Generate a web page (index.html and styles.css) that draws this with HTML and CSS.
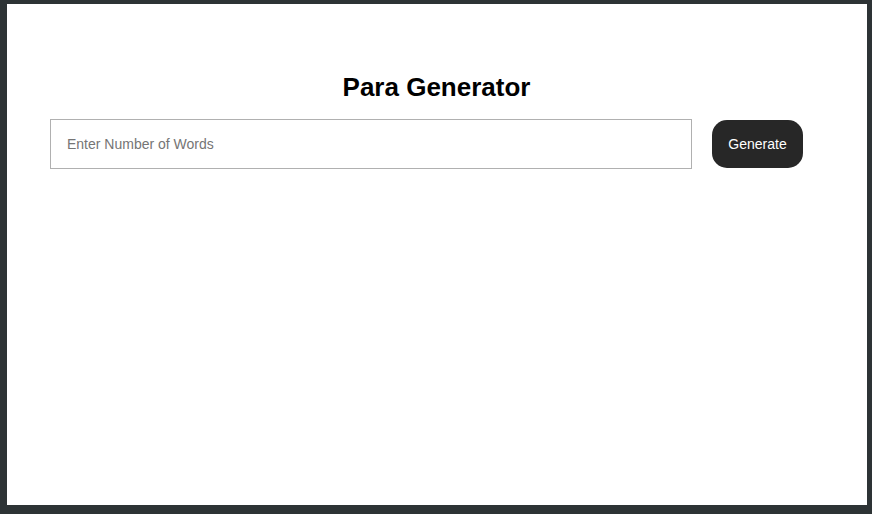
FILE: index.html
```html
<!DOCTYPE html>
<html>
<head>
<meta charset="utf-8">
<link rel="stylesheet" href="styles.css">
</head>
<body>
<main class="page">
  <h1 class="title">Para Generator</h1>
  <div class="row">
    <input class="words" type="text" placeholder="Enter Number of Words">
    <button class="btn">Generate</button>
  </div>
</main>
</body>
</html>
```
FILE: styles.css
```css
html, body { margin: 0; padding: 0; }
body {
  background: #2d3335;
  padding: 4px 5px 9px 7px;
  font-family: "Liberation Sans", Arial, sans-serif;
}
.page {
  background: #ffffff;
  height: 501px;
  box-sizing: border-box;
  padding: 68px 64px 0 43px;
}
.title {
  margin: 0 0 17px 0;
  text-align: center;
  font-size: 26px;
  line-height: 30px;
  font-weight: bold;
  color: #000;
  padding-left: 20px;
}
.row {
  display: flex;
  align-items: center;
  gap: 20px;
}
.words {
  flex: 1;
  height: 50px;
  box-sizing: border-box;
  border: 1px solid #b0b0b0;
  padding: 0 16px;
  font-family: "Liberation Sans", Arial, sans-serif;
  font-size: 14px;
  outline: none;
}
.words::placeholder { color: #757575; }
.btn {
  width: 91px;
  height: 48px;
  border: none;
  border-radius: 15px;
  background: #272727;
  color: #ffffff;
  font-family: "Liberation Sans", Arial, sans-serif;
  font-size: 14px;
}
```
